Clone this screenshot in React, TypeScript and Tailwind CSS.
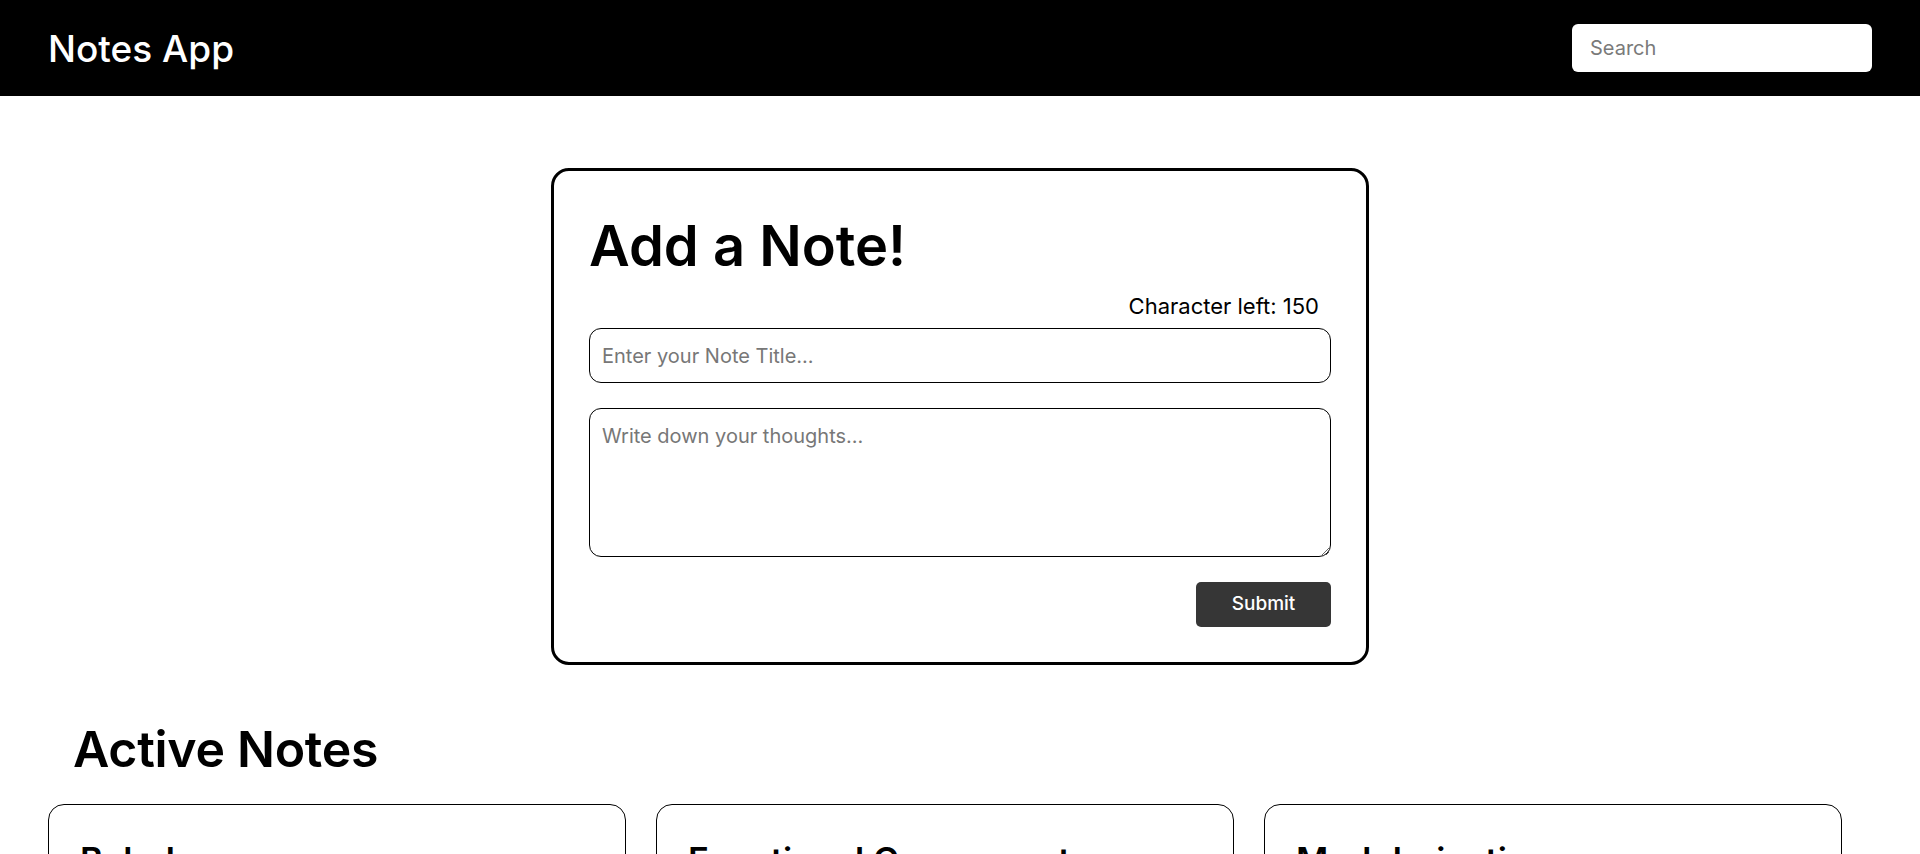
import { useState } from "react";

type Note = {
  id: number;
  title: string;
  body: string;
  createdAt: string;
};

const initialNotes: Note[] = [
  {
    id: 1,
    title: "Babel",
    body: "Babel merupakan tools open-source yang digunakan untuk mengubah sintaks ECMAScript 2015+ menjadi sintaks yang didukung oleh JavaScript engine versi lama.",
    createdAt: "Kamis, 14 April 2022",
  },
  {
    id: 2,
    title: "Functional Component",
    body: "Functional component merupakan React component yang dibuat menggunakan fungsi JavaScript.",
    createdAt: "Kamis, 14 April 2022",
  },
  {
    id: 3,
    title: "Modularization",
    body: "Dalam konteks pemrograman JavaScript, modularization merupakan teknik dalam memecah atau menggunakan kode dalam berkas JavaScript secara terpisah berdasarkan tanggung jawabnya masing-masing.",
    createdAt: "Kamis, 14 April 2022",
  },
];

const MAX_TITLE = 150;

function Header() {
  return (
    <header className="h-[96px] bg-black px-[48px] flex items-center justify-between">
      <h1 className="text-white text-[37px] font-medium leading-none">
        Notes App
      </h1>
      <input
        type="text"
        placeholder="Search"
        className="w-[300px] h-[48px] bg-white rounded-md px-[18px] text-[20px] text-black placeholder:text-[#7a7a7a] outline-none"
      />
    </header>
  );
}

function NoteCard({ note }: { note: Note }) {
  return (
    <div className="w-[578px] border border-black rounded-2xl pt-[34px] px-[31px] pb-[28px] flex flex-col gap-3">
      <h3 className="text-[35px] font-semibold leading-[1.2] text-black">
        {note.title}
      </h3>
      <p className="text-[16px] text-[#666]">{note.createdAt}</p>
      <p className="text-[18px] text-black leading-[1.6]">{note.body}</p>
    </div>
  );
}

export default function App() {
  const [title, setTitle] = useState("");
  const [body, setBody] = useState("");

  return (
    <div className="min-h-screen bg-white font-['Inter',sans-serif] text-black">
      <Header />

      {/* add note form */}
      <section className="mt-[72px] mx-auto w-[818px] border-[3px] border-black rounded-[18px] p-[35px] flex flex-col">
        <h2 className="mt-[12px] text-[56px] font-semibold leading-[56px]">
          Add a Note!
        </h2>
        <p className="mt-[19px] self-end pr-[12px] text-[22px] leading-[26px]">
          Character left: {MAX_TITLE - title.length}
        </p>
        <input
          type="text"
          value={title}
          onChange={(e) => setTitle(e.target.value.slice(0, MAX_TITLE))}
          placeholder="Enter your Note Title..."
          className="mt-[9px] h-[55px] w-full border border-black rounded-xl px-[12px] text-[20px] placeholder:text-[#777] outline-none"
        />
        <textarea
          value={body}
          onChange={(e) => setBody(e.target.value)}
          placeholder="Write down your thoughts..."
          className="mt-[25px] h-[149px] w-full border border-black rounded-xl px-[12px] pt-[13px] text-[20px] leading-[28px] placeholder:text-[#777] outline-none"
        />
        <button
          type="submit"
          className="mt-[25px] self-end w-[135px] h-[45px] bg-[#363636] text-white text-[19px] font-medium rounded-[5px]"
        >
          Submit
        </button>
      </section>

      {/* notes list */}
      <section className="mt-[54px] pl-[48px]">
        <h2 className="pl-[25px] text-[50px] font-semibold leading-[60px] tracking-[-0.3px]">
          Active Notes
        </h2>
        <div className="mt-[25px] flex flex-wrap gap-[30px]">
          {initialNotes.map((note) => (
            <NoteCard key={note.id} note={note} />
          ))}
        </div>
      </section>
    </div>
  );
}
